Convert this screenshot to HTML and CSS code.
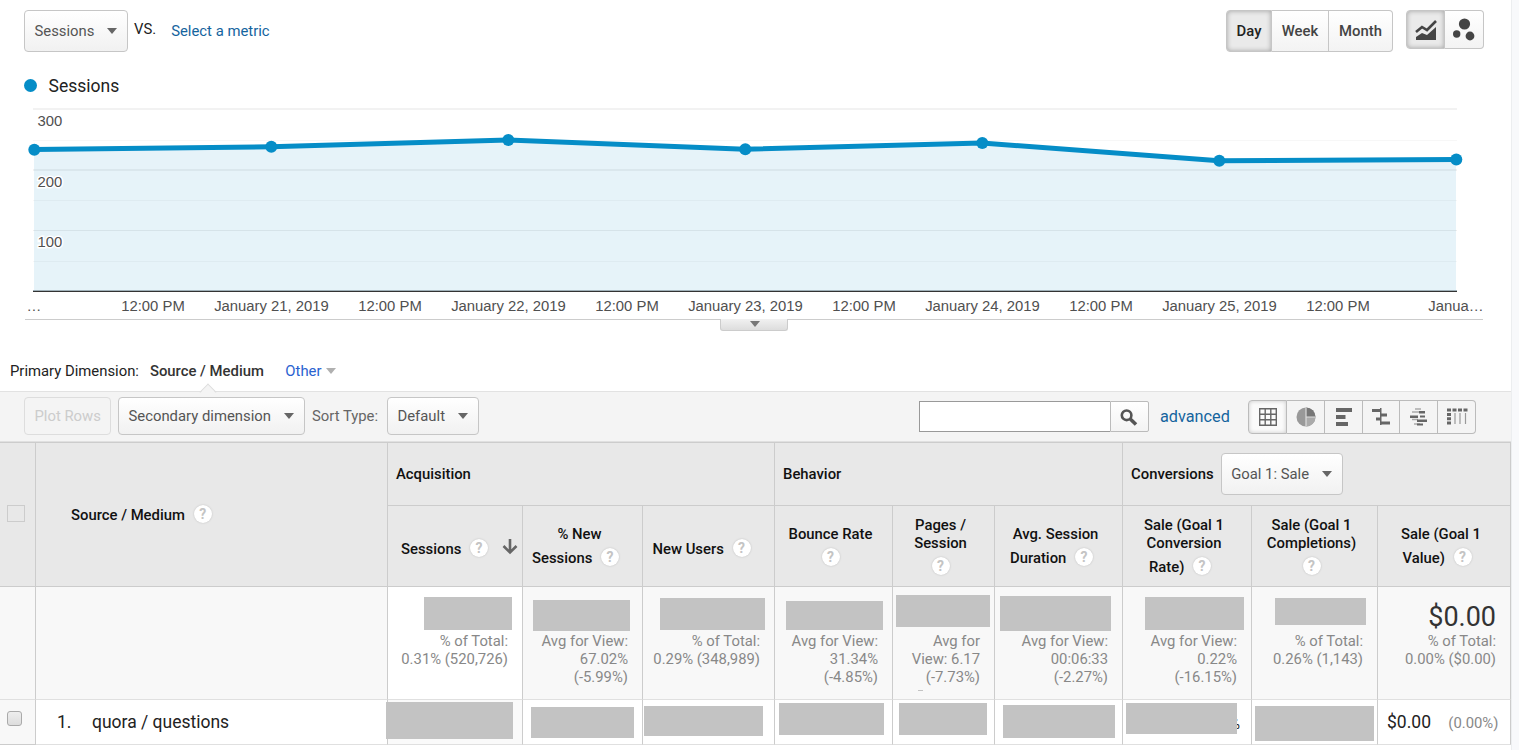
FILE: index.html
```
<!DOCTYPE html>
<html lang="en">
<head>
    <meta charset="UTF-8">
    <meta name="viewport" content="width=device-width, initial-scale=1.0">
    <title>Source / Medium</title>
    <link rel="stylesheet" href="styles.css">
</head>
<body>
    <div class="page">
        <!-- Metric picker and date granularity -->
        <div class="topbar">
            <button class="btn metric">Sessions <i class="caret"></i></button>
            <span class="vs">VS.</span>
            <a class="select-metric" href="#">Select a metric</a>
            <div class="group range">
                <button class="active">Day</button>
                <button>Week</button>
                <button>Month</button>
            </div>
            <div class="group charts">
                <button class="active">
                    <svg width="22" height="22" viewBox="0 0 22 22"><path d="M1 21v-3l6-4 5 2 9-8v13z" fill="#444"/><path d="M1 13l6-5 5 3 9-9" fill="none" stroke="#444" stroke-width="2.6"/></svg>
                </button>
                <button>
                    <svg width="22" height="24" viewBox="0 0 22 24" fill="#444"><circle cx="11.5" cy="6" r="5.6"/><circle cx="3.7" cy="16" r="3.7"/><circle cx="17" cy="18" r="4.4"/></svg>
                </button>
            </div>
        </div>

        <div class="legend"><i class="dot"></i>Sessions</div>

        <!-- Line chart -->
        <div class="chart">
            <svg width="1511" height="220" viewBox="0 100 1511 220">
                <g class="grid">
                    <path d="M33 109H1457" stroke="#f2f2f2" stroke-width="2"/>
                    <path d="M33 140.5H1457" stroke="#f7f7f7"/>
                    <path d="M33 170H1457" stroke="#f2f2f2" stroke-width="2"/>
                    <path d="M33 200.5H1457" stroke="#f7f7f7"/>
                    <path d="M33 230.5H1457" stroke="#eee"/>
                    <path d="M33 261.5H1457" stroke="#f7f7f7"/>
                </g>
                <path class="area" d="M34 149.5L271 146.7L508 140L745 149.2L982 143L1219 160.7L1456 159.5V291H34Z"/>
                <path d="M33 290.5H1457" stroke="#9fb0b8"/>
                <path d="M33 291.5H1457" stroke="#333"/>
                <polyline class="line" points="34,149.5 271,146.7 508,140 745,149.2 982,143 1219,160.7 1456,159.5"/>
                <g fill="#058dc7">
                    <circle cx="34.3" cy="149.7" r="6"/>
                    <circle cx="271.3" cy="146.7" r="6"/>
                    <circle cx="508.3" cy="140" r="6"/>
                    <circle cx="745.3" cy="149.2" r="6"/>
                    <circle cx="982.3" cy="143" r="6"/>
                    <circle cx="1219.3" cy="160.7" r="6"/>
                    <circle cx="1456.3" cy="159.5" r="6"/>
                </g>
                <g class="ylabels">
                    <text x="37.5" y="126">300</text>
                    <text x="37.5" y="187">200</text>
                    <text x="37.5" y="247">100</text>
                </g>
                <g class="xlabels">
                    <text x="34" y="311">…</text>
                    <text x="153" y="311">12:00 PM</text>
                    <text x="271.5" y="311">January 21, 2019</text>
                    <text x="390" y="311">12:00 PM</text>
                    <text x="508.5" y="311">January 22, 2019</text>
                    <text x="627" y="311">12:00 PM</text>
                    <text x="745.5" y="311">January 23, 2019</text>
                    <text x="864" y="311">12:00 PM</text>
                    <text x="982.5" y="311">January 24, 2019</text>
                    <text x="1101" y="311">12:00 PM</text>
                    <text x="1219.5" y="311">January 25, 2019</text>
                    <text x="1338" y="311">12:00 PM</text>
                    <text x="1456" y="311">Janua…</text>
                </g>
                <path d="M25 319.5H1483" stroke="#ccc"/>
            </svg>
            <div class="expander"><i class="caret"></i></div>
        </div>

        <div class="dimensions">
            <span>Primary Dimension:</span>
            <b>Source / Medium</b>
            <a href="#">Other <i class="caret"></i></a>
        </div>

        <div class="toolbar">
            <button class="btn disabled">Plot Rows</button>
            <button class="btn secondary">Secondary dimension <i class="caret"></i></button>
            <span class="sort-label">Sort Type:</span>
            <button class="btn sort">Default <i class="caret"></i></button>
            <div class="search">
                <input type="text" aria-label="Search">
                <button aria-label="Go">
                    <svg width="18" height="18" viewBox="0 0 18 18" fill="none" stroke="#555"><circle cx="6.6" cy="6.3" r="4.8" stroke-width="2.6"/><path d="M10.3 10L16 15.5" stroke-width="3.6"/></svg>
                </button>
            </div>
            <a class="advanced" href="#">advanced</a>
            <div class="group views">
                <button class="active">
                    <svg width="20" height="20" viewBox="0 0 20 20" fill="none" stroke="#666" stroke-width="1.4"><path d="M1.7 1.7h16.6v16.6H1.7zM7.2 1.7v16.6M12.8 1.7v16.6M1.7 7.2h16.6M1.7 12.8h16.6"/></svg>
                </button>
                <button>
                    <svg width="20" height="20" viewBox="0 0 20 20"><circle cx="10" cy="10" r="9.5" fill="#999"/><path d="M10 10V.5A9.5 9.5 0 0 1 19.5 10z" fill="#777"/><path d="M10 10h9.5A9.5 9.5 0 0 1 10 19.5z" fill="#aaa"/><path d="M10 .5v19M10 10h9.5" stroke="#ddd" stroke-width="1.2"/></svg>
                </button>
                <button>
                    <svg width="20" height="20" viewBox="0 0 20 20" fill="#666"><path d="M2 1h16v4H2zM2 8h9.5v4H2zM2 15h12v4H2z"/></svg>
                </button>
                <button>
                    <svg width="20" height="20" viewBox="0 0 20 20" fill="#666"><path d="M1 2h9v3H1zM10 6.5h6v3h-6zM5 10.5h5v3H5zM10 14.5h9v3h-9zM9 1h1.5v17H9z"/></svg>
                </button>
                <button>
                    <svg width="20" height="20" viewBox="0 0 20 20"><path d="M6 2h6M3 5h7M3 12.5h6M5 17h6" stroke="#aaa" stroke-width="1.5"/><path d="M10 4h6v2.5h-6zM1 8.5h8v2.5H1zM11 8.5h5v2h-5zM8 12.5h10v2.5H8zM8 16.5h6v2H8z" fill="#666"/></svg>
                </button>
                <button>
                    <svg width="22" height="20" viewBox="0 0 22 20"><path d="M1 3h21" stroke="#666" stroke-width="3" stroke-dasharray="4 1.5"/><path d="M3 6v12" stroke="#666" stroke-width="4" stroke-dasharray="3 1.3"/><path d="M9 6v11M14 6v11M19.5 6v11" stroke="#999" stroke-width="1.2"/></svg>
                </button>
            </div>
        </div>

        <!-- Report table -->
        <table>
            <colgroup>
                <col class="c-check"><col class="c-source"><col class="c-sessions"><col class="c-new"><col class="c-users">
                <col class="c-bounce"><col class="c-pages"><col class="c-duration"><col class="c-rate"><col class="c-compl"><col class="c-value">
            </colgroup>
            <thead>
                <tr class="groups">
                    <th rowspan="2" class="check"><i class="box"></i></th>
                    <th rowspan="2" class="source">Source / Medium <i class="help">?</i></th>
                    <th colspan="3">Acquisition</th>
                    <th colspan="3">Behavior</th>
                    <th colspan="3"><div class="goal">Conversions <button class="btn">Goal 1: Sale <i class="caret"></i></button></div></th>
                </tr>
                <tr class="metrics">
                    <th class="sorted">Sessions <i class="help">?</i>
                        <svg class="arrow" width="16" height="18" viewBox="0 0 16 18" fill="none" stroke="#666" stroke-width="2.6"><path d="M8 1v13M1.5 8L8 14.5L14.5 8"/></svg>
                    </th>
                    <th>% New<br>Sessions <i class="help">?</i></th>
                    <th>New Users <i class="help">?</i></th>
                    <th>Bounce Rate<br><i class="help alone">?</i></th>
                    <th>Pages /<br>Session<br><i class="help alone">?</i></th>
                    <th>Avg. Session<br>Duration <i class="help">?</i></th>
                    <th>Sale (Goal 1<br>Conversion<br>Rate) <i class="help">?</i></th>
                    <th>Sale (Goal 1<br>Completions)<br><i class="help alone">?</i></th>
                    <th>Sale (Goal 1<br>Value) <i class="help">?</i></th>
                </tr>
            </thead>
            <tbody>
                <tr class="summary">
                    <td></td>
                    <td></td>
                    <td class="white"><div class="value"></div>% of Total:<br>0.31% (520,726)<i class="mask s1"></i></td>
                    <td><div class="value"></div>Avg for View:<br>67.02%<br>(-5.99%)<i class="mask s2"></i></td>
                    <td><div class="value"></div>% of Total:<br>0.29% (348,989)<i class="mask s3"></i></td>
                    <td><div class="value"></div>Avg for View:<br>31.34%<br>(-4.85%)<i class="mask s4"></i></td>
                    <td><div class="value"></div>Avg for<br>View: 6.17<br>(-7.73%)<i class="mask s5"></i><i class="mask speck"></i></td>
                    <td><div class="value"></div>Avg for View:<br>00:06:33<br>(-2.27%)<i class="mask s6"></i></td>
                    <td><div class="value"></div>Avg for View:<br>0.22%<br>(-16.15%)<i class="mask s7"></i></td>
                    <td><div class="value"></div>% of Total:<br>0.26% (1,143)<i class="mask s8"></i></td>
                    <td><div class="value">$0.00</div>% of Total:<br>0.00% ($0.00)</td>
                </tr>
                <tr class="row">
                    <td class="check"><i class="checkbox"></i></td>
                    <td class="name"><span>1.</span>quora / questions</td>
                    <td class="tint"><i class="mask r1"></i></td>
                    <td><i class="mask r2"></i></td>
                    <td><i class="mask r3"></i></td>
                    <td><i class="mask r4"></i></td>
                    <td><i class="mask r5"></i></td>
                    <td><i class="mask r6"></i></td>
                    <td class="percent">%<i class="mask r7"></i></td>
                    <td><i class="mask r8"></i></td>
                    <td class="money">$0.00 <small>(0.00%)</small></td>
                </tr>
            </tbody>
        </table>
    </div>
</body>
</html>
```
FILE: styles.css
```
* {
    box-sizing: border-box;
}
body {
    margin: 0;
    height: 750px;
    overflow: hidden;
    background: #f8f9fb;
    font-family: Roboto, sans-serif;
    font-size: 14.85px;
    line-height: 18px;
    color: #222;
}
a {
    color: #15649e;
    text-decoration: none;
}
button {
    font: inherit;
    white-space: nowrap;
    cursor: pointer;
}
svg {
    display: block;
}
.page {
    width: 1512px;
    height: 750px;
    background: white;
    border-right: 1px solid #eceef0;
}

/* Buttons */
.btn {
    display: flex;
    align-items: center;
    justify-content: space-between;
    height: 42px;
    padding: 0 10px 0 9.5px;
    border: 1px solid #c6c6c6;
    border-radius: 4px;
    background: linear-gradient(#fff, #f1f1f1);
    color: #555;
    font-weight: 400;
}
.caret {
    width: 0;
    height: 0;
    border: 5px solid transparent;
    border-top: 6px solid #666;
    border-bottom: 0;
}
.group {
    display: flex;
}
.group button {
    display: flex;
    align-items: center;
    justify-content: center;
    padding: 0;
    border: 1px solid #c6c6c6;
    border-left-width: 0;
    background: linear-gradient(#fff, #f3f3f3);
    color: #444;
    font-weight: 500;
}
.group button:first-child {
    border-left-width: 1px;
    border-radius: 4px 0 0 4px;
}
.group button:last-child {
    border-radius: 0 4px 4px 0;
}
.group button.active {
    background: #eaeaea;
    box-shadow: inset 0 0 5px rgba(0, 0, 0, 0.3);
    color: #222;
}

/* Top bar */
.topbar {
    display: flex;
    align-items: flex-start;
    height: 66px;
    padding: 10px 27px 0 24px;
}
.metric {
    width: 104px;
}
.vs {
    margin: 10px 0 0 6px;
}
.select-metric {
    margin: 12px 0 0 15px;
}
.range {
    margin-left: auto;
}
.range button {
    width: 57px;
    height: 42px;
}
.range button:first-child {
    width: 46px;
}
.range button:last-child {
    width: 64px;
}
.charts {
    margin-left: 13px;
}
.charts button {
    width: 39px;
    height: 39px;
}
.legend {
    display: flex;
    align-items: center;
    gap: 11.5px;
    height: 34px;
    padding: 5px 0 0 24px;
    font-size: 17.5px;
}
.dot {
    width: 13px;
    height: 13px;
    border-radius: 50%;
    background: #058dc7;
}

/* Chart */
.chart {
    height: 250px;
}
.area {
    fill: #058dc7;
    fill-opacity: 0.1;
}
.line {
    fill: none;
    stroke: #058dc7;
    stroke-width: 5;
}
.chart text {
    font-family: "Liberation Sans", Arial, sans-serif;
    font-size: 14.85px;
    fill: #505050;
}
.ylabels text {
    stroke: white;
    stroke-width: 3;
    paint-order: stroke;
}
.xlabels text {
    text-anchor: middle;
}
.expander {
    display: flex;
    justify-content: center;
    width: 68px;
    height: 12px;
    margin: -1px 0 0 720px;
    padding: 2px 0 0 1px;
    border: 1px solid #ccc;
    border-top: 0;
    border-radius: 0 0 3px 3px;
    background: linear-gradient(#f1f1f1, #ddd);
    position: relative;
}
.expander .caret {
    border-top-color: #777;
}

/* Dimension tabs */
.dimensions {
    display: flex;
    height: 41px;
    padding: 12px 0 0 10px;
}
.dimensions b {
    margin: 0 21.5px 0 11px;
    font-weight: 500;
    color: #333;
}
.dimensions a {
    display: flex;
    align-items: center;
    gap: 4px;
    height: 18px;
    color: #2a62d0;
}
.dimensions .caret {
    border-top-color: #b0b0b0;
}

/* Toolbar */
.toolbar {
    position: relative;
    display: flex;
    align-items: center;
    width: 1511px;
    height: 51px;
    padding: 0 35px 0 24px;
    border-top: 1px solid #e2e2e2;
    border-bottom: 1px solid #e0e0e0;
    background: #f4f4f4;
}
.toolbar::before {
    content: "";
    position: absolute;
    top: -6px;
    left: 202px;
    width: 11px;
    height: 11px;
    border: 1px solid #ddd;
    border-right: 0;
    border-bottom: 0;
    background: linear-gradient(135deg, #f4f4f4 50%, transparent 50%);
    transform: rotate(45deg);
}
.toolbar .btn {
    height: 38px;
    margin-bottom: 2px;
}
.toolbar .disabled {
    width: 87px;
    background: #f4f4f4;
    border-color: #ddd;
    color: #ccc;
}
.toolbar .secondary {
    width: 187px;
    margin: 0 7px 2px;
}
.sort-label {
    width: 75px;
    margin-bottom: 2px;
    color: #666;
}
.sort {
    width: 92px;
}
.search {
    display: flex;
    margin-left: auto;
}
.search input {
    width: 191px;
    height: 31px;
    border: 1px solid #999;
    border-right: 0;
}
.search button {
    width: 39px;
    height: 31px;
    padding: 0 9px;
    border: 1px solid #bbb;
    border-radius: 0 2px 2px 0;
    background: linear-gradient(#fff, #f3f3f3);
}
.search svg {
    margin-top: 3px;
}
.advanced {
    width: 88px;
    padding-left: 11px;
    font-size: 16.25px;
}
.views {
    margin-left: 11px;
}
.views button {
    width: 38px;
    height: 34px;
    border-color: #bbb;
    background: #f4f4f4;
}
.views button.active {
    width: 39px;
    padding-left: 1px;
    background: #fafafa;
    box-shadow: inset 0 0 4px rgba(0, 0, 0, 0.2);
}
.views button:nth-child(4) {
    width: 37px;
}

/* Table */
table {
    width: 1511px;
    table-layout: fixed;
    border-collapse: separate;
    border-spacing: 0;
    border-top: 1px solid #ccc;
}
.c-check { width: 36px; }
.c-source { width: 352px; }
.c-sessions { width: 135px; }
.c-new { width: 120px; }
.c-users { width: 132px; }
.c-bounce { width: 118px; }
.c-pages { width: 102px; }
.c-duration { width: 128px; }
.c-rate { width: 129px; }
.c-compl { width: 126px; }
.c-value { width: 133px; }
th, td {
    position: relative;
    padding: 0;
    border-right: 1px solid #ccc;
    border-bottom: 1px solid #ccc;
}
th {
    background: #e8e8e8;
    color: #111;
    font-weight: 500;
}
.groups {
    height: 63px;
}
.groups th {
    padding-left: 8px;
    text-align: left;
}
.groups th.source {
    padding: 0 0 5px 35px;
}
.groups th.check {
    padding: 0 0 2px 7px;
}
.box {
    display: block;
    width: 18px;
    height: 17px;
    border: 1px solid #ccc;
}
.goal {
    display: flex;
    align-items: center;
    gap: 7px;
}
.goal .btn {
    width: 122px;
}
.metrics {
    height: 81px;
}
.metrics th {
    padding: 0 10px 0 4px;
}
.metrics th.sorted {
    padding-right: 17px;
}
.arrow {
    position: absolute;
    top: 32px;
    right: 4px;
}
.help {
    display: inline-block;
    width: 18px;
    height: 18px;
    margin: 5px 8px 2px 5px;
    vertical-align: 1px;
    border-radius: 50%;
    background: white;
    box-shadow: 0 0 2px #bbb;
    color: #c4c4c4;
    font-size: 14px;
    font-style: normal;
    font-weight: 700;
    text-align: center;
}
.help.alone {
    margin-right: 5px;
}
.summary {
    height: 113px;
}
.summary td {
    padding: 15px 14px 0 0;
    border-bottom-color: #e0e0e0;
    background: #f8f8f8;
    color: #888;
    text-align: right;
    vertical-align: top;
    white-space: nowrap;
}
.summary td.white {
    background: white;
}
.value {
    height: 30px;
    font-size: 27px;
    line-height: 30px;
    color: #333;
}
.row {
    height: 45px;
}
.row td {
    border-bottom-color: #e0e0e0;
    font-size: 17.5px;
}
.row td.check {
    padding: 0 0 7px 7px;
    background: #f8f8f8;
    border-bottom-color: #ccc;
}
.row td.tint {
    background: #fafafa;
}
.checkbox {
    display: block;
    width: 15px;
    height: 15px;
    border: 1px solid #aaa;
    border-radius: 3px;
    background: linear-gradient(#eee, #ddd);
}
.name span {
    display: inline-block;
    width: 56px;
    padding-left: 21px;
}
.row td.percent {
    padding: 4px 11px 0 0;
    font-size: 15px;
    text-align: right;
}
.row td.money {
    padding: 0 9px;
    font-size: 17.5px;
    white-space: nowrap;
}
.money small {
    margin-left: 13px;
    font-size: 14.85px;
    color: #888;
}

/* Redacted figures */
.mask {
    position: absolute;
    background: #c3c3c3;
}
.s1 { left: 36px; top: 10px; width: 88px; height: 33px; }
.s2 { left: 10px; top: 13px; width: 97px; height: 31px; }
.s3 { left: 17px; top: 11px; width: 105px; height: 32px; }
.s4 { left: 11px; top: 14px; width: 97px; height: 29px; }
.s5 { left: 3px; top: 8px; width: 94px; height: 32px; }
.s6 { left: 5px; top: 9px; width: 111px; height: 35px; }
.s7 { left: 22px; top: 10px; width: 99px; height: 33px; }
.s8 { left: 23px; top: 11px; width: 91px; height: 27px; }
.speck { left: 25px; top: 103px; width: 5px; height: 1px; }
.r1 { left: -2px; top: 2px; width: 127px; height: 37px; }
.r2 { left: 8px; top: 7px; width: 103px; height: 31px; }
.r3 { left: 1px; top: 6px; width: 119px; height: 30px; }
.r4 { left: 4px; top: 3px; width: 105px; height: 32px; }
.r5 { left: 6px; top: 3px; width: 88px; height: 32px; }
.r6 { left: 8px; top: 5px; width: 112px; height: 33px; }
.r7 { left: 3px; top: 3px; width: 111px; height: 31px; }
.r8 { left: 3px; top: 6px; width: 119px; height: 35px; }
```
